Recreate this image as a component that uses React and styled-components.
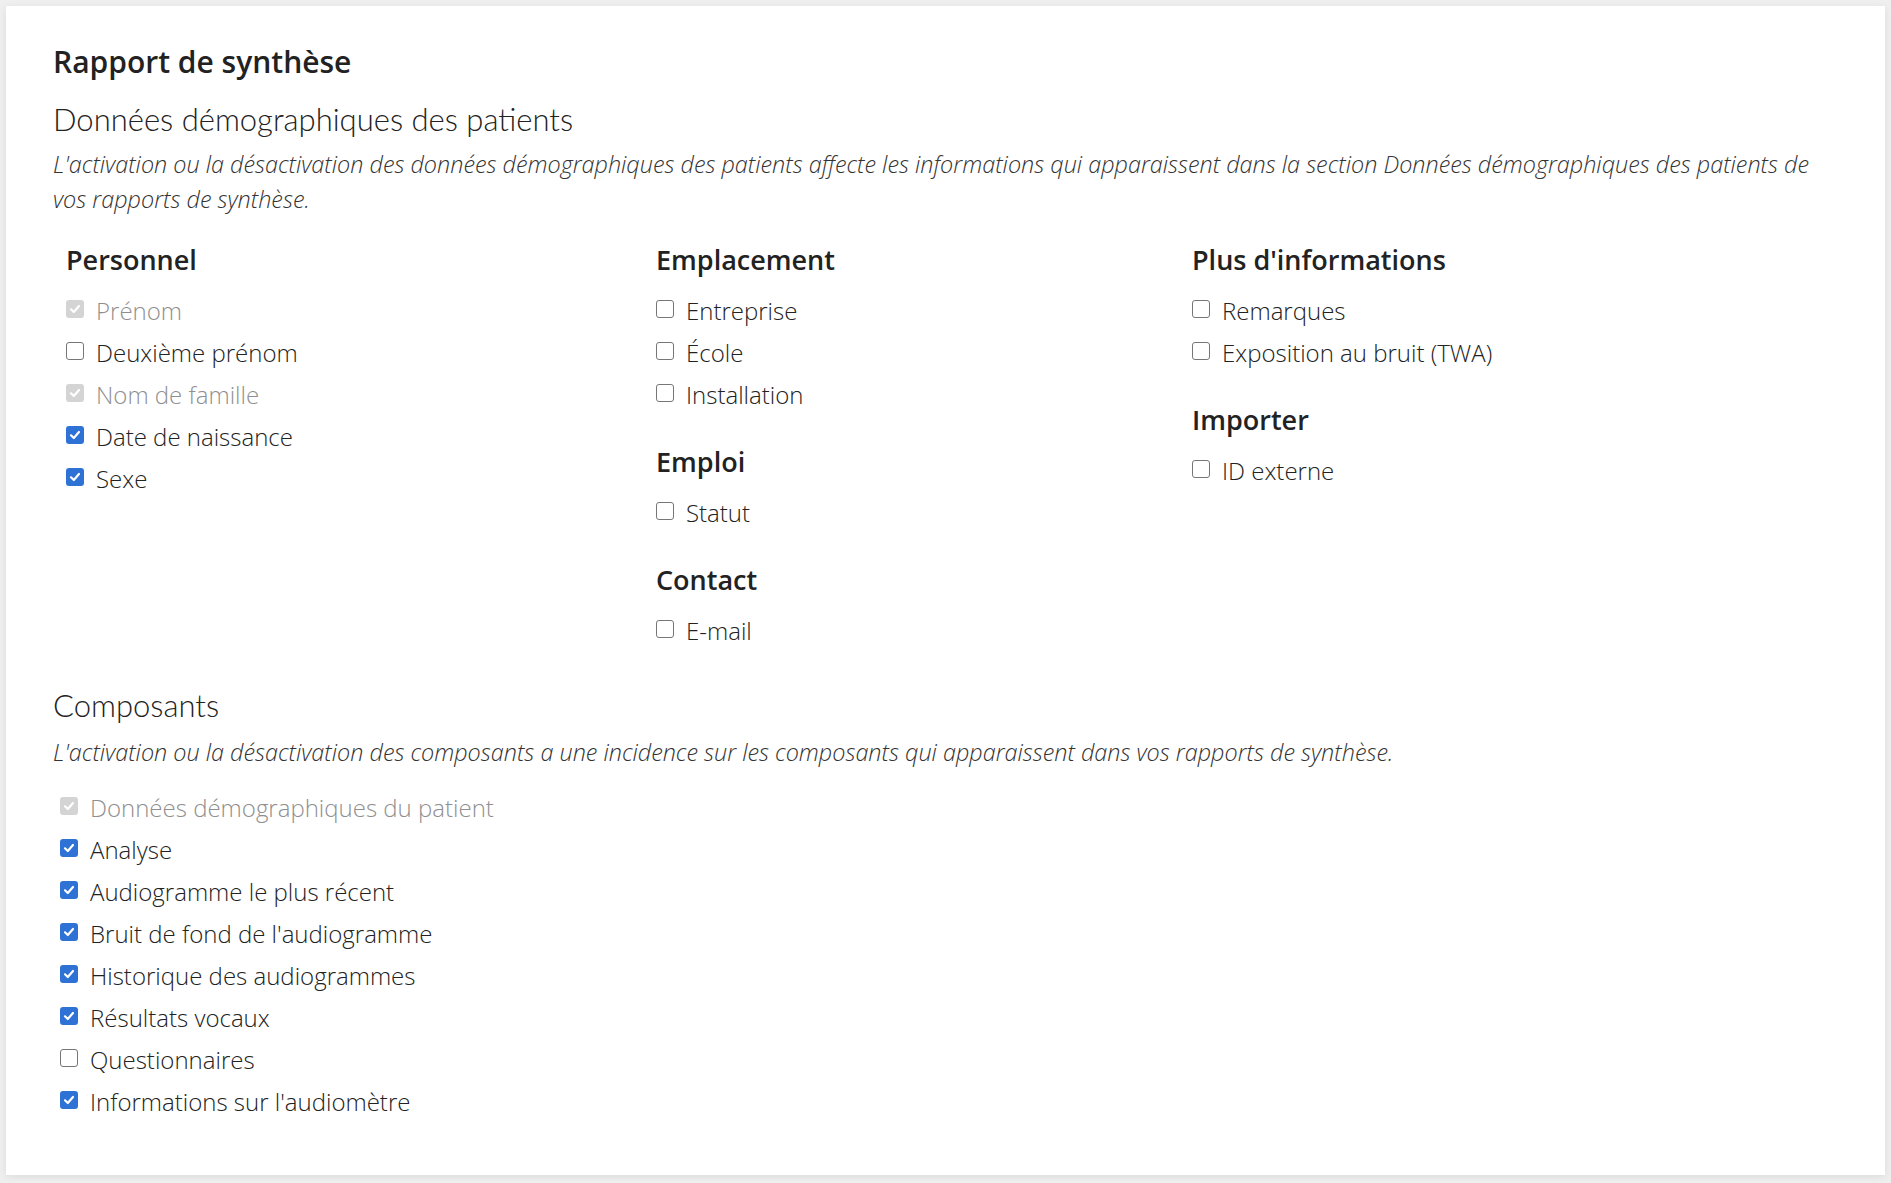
import React from "react";
import styled, { createGlobalStyle } from "styled-components";

const GlobalStyle = createGlobalStyle`
  html, body {
    margin: 0;
    padding: 0;
    background: #efefef;
  }
  * {
    box-sizing: border-box;
  }
`;

const personnel = [
  { label: "Prénom", checked: true, disabled: true },
  { label: "Deuxième prénom" },
  { label: "Nom de famille", checked: true, disabled: true },
  { label: "Date de naissance", checked: true },
  { label: "Sexe", checked: true },
];

const middleGroups = [
  {
    title: "Emplacement",
    items: [{ label: "Entreprise" }, { label: "École" }, { label: "Installation" }],
  },
  { title: "Emploi", items: [{ label: "Statut" }] },
  { title: "Contact", items: [{ label: "E-mail" }] },
];

const rightGroups = [
  {
    title: "Plus d'informations",
    items: [{ label: "Remarques" }, { label: "Exposition au bruit (TWA)" }],
  },
  { title: "Importer", items: [{ label: "ID externe" }] },
];

const composants = [
  { label: "Données démographiques du patient", checked: true, disabled: true },
  { label: "Analyse", checked: true },
  { label: "Audiogramme le plus récent", checked: true },
  { label: "Bruit de fond de l'audiogramme", checked: true },
  { label: "Historique des audiogrammes", checked: true },
  { label: "Résultats vocaux", checked: true },
  { label: "Questionnaires" },
  { label: "Informations sur l'audiomètre", checked: true },
];

function Check({ label, checked, disabled, indent }) {
  return (
    <Row $indent={indent} $disabled={disabled}>
      <Box $checked={checked} $disabled={disabled}>
        {checked && (
          <svg width="12" height="12" viewBox="0 0 12 12">
            <path
              d="M2 6.3 L4.8 9 L10 3"
              fill="none"
              stroke="#fff"
              strokeWidth="2.2"
              strokeLinecap="round"
              strokeLinejoin="round"
            />
          </svg>
        )}
      </Box>
      <span>{label}</span>
    </Row>
  );
}

function Group({ title, items }) {
  return (
    <GroupBox>
      <GroupTitle>{title}</GroupTitle>
      {items.map((it) => (
        <Check key={it.label} {...it} />
      ))}
    </GroupBox>
  );
}

export default function App() {
  return (
    <>
      <GlobalStyle />
      <Card>
        <Title>Rapport de synthèse</Title>
        <Subtitle>Données démographiques des patients</Subtitle>
        <Note>
          L'activation ou la désactivation des données démographiques des
          patients affecte les informations qui apparaissent dans la section
          Données démographiques des patients de vos rapports de synthèse.
        </Note>
        <Columns>
          <Column>
            <Group title="Personnel" items={personnel} />
          </Column>
          <Column>
            {middleGroups.map((g) => (
              <Group key={g.title} {...g} />
            ))}
          </Column>
          <Column>
            {rightGroups.map((g) => (
              <Group key={g.title} {...g} />
            ))}
          </Column>
        </Columns>
        <Subtitle $top={37}>Composants</Subtitle>
        <Note $top={13}>
          L'activation ou la désactivation des composants a une incidence sur
          les composants qui apparaissent dans vos rapports de synthèse.
        </Note>
        <List>
          {composants.map((it) => (
            <Check key={it.label} {...it} indent />
          ))}
        </List>
      </Card>
    </>
  );
}

const Card = styled.div`
  margin: 6px;
  width: 1879px;
  background: #fff;
  padding: 38px 47px 53px;
  box-shadow: 0 2px 8px rgba(0, 0, 0, 0.08);
  font-family: "Open Sans", sans-serif;
  color: #212529;
`;

const Title = styled.h1`
  margin: 0;
  font-size: 30px;
  line-height: 36px;
  font-weight: 600;
  color: #222;
`;

const Subtitle = styled.h2`
  margin: ${(p) => p.$top || 22}px 0 0;
  font-family: "Lato", sans-serif;
  font-size: 31px;
  line-height: 34px;
  font-weight: 300;
  color: #222;
`;

const Note = styled.p`
  margin: ${(p) => p.$top || 11}px 0 0;
  font-size: 23.4px;
  line-height: 35px;
  font-style: italic;
  font-weight: 300;
  color: #333;
`;

const Columns = styled.div`
  display: grid;
  grid-template-columns: 590px 536px 1fr;
  margin-top: 27px;
  padding-left: 13px;
`;

const Column = styled.div`
  display: flex;
  flex-direction: column;
  gap: 31px;
`;

const GroupBox = styled.div`
  display: flex;
  flex-direction: column;
`;

const GroupTitle = styled.h3`
  margin: 0 0 13px;
  font-size: 27px;
  line-height: 32px;
  font-weight: 600;
  color: #222;
`;

const Row = styled.label`
  display: flex;
  align-items: center;
  gap: 12px;
  height: 42px;
  padding-left: ${(p) => (p.$indent ? 7 : 0)}px;
  font-size: 24px;
  font-weight: 300;
  color: ${(p) => (p.$disabled ? "#8f8f8f" : "#222")};
`;

const Box = styled.span`
  flex: none;
  width: 18px;
  height: 18px;
  border-radius: 3px;
  display: flex;
  align-items: center;
  justify-content: center;
  margin-top: -2px;
  background: ${(p) =>
    p.$disabled ? "#d4d4d4" : p.$checked ? "#2f72d6" : "#fff"};
  border: ${(p) => (p.$checked ? "none" : "1.5px solid #767676")};
`;

const List = styled.div`
  display: flex;
  flex-direction: column;
  margin-top: 16px;
`;
